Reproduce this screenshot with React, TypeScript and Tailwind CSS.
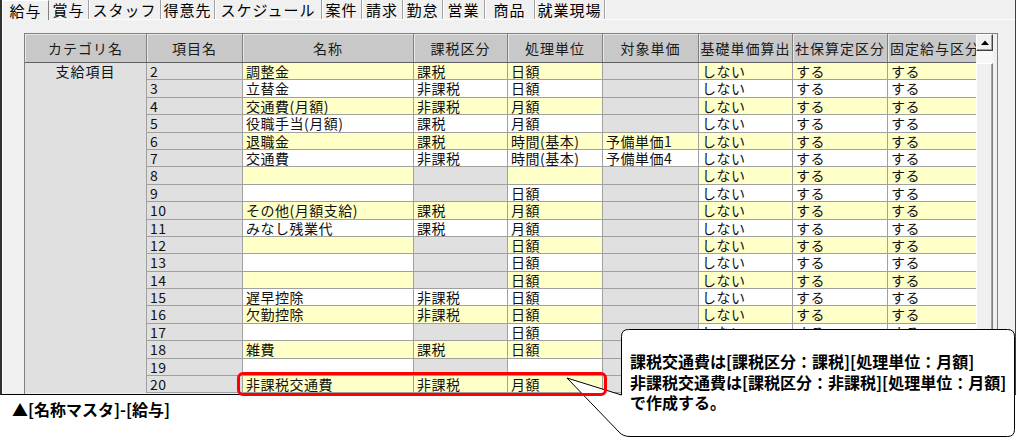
import React from 'react'

const font = "font-['Noto_Sans_CJK_JP','Noto_Sans',sans-serif]"

const tabs = [
  { label: '給与', w: 'w-[47px]' },
  { label: '賞与', w: 'w-[40px]' },
  { label: 'スタッフ', w: 'w-[72px]' },
  { label: '得意先', w: 'w-[54px]' },
  { label: 'スケジュール', w: 'w-[107px]' },
  { label: '案件', w: 'w-[40px]' },
  { label: '請求', w: 'w-[41px]' },
  { label: '勤怠', w: 'w-[40px]' },
  { label: '営業', w: 'w-[42px]' },
  { label: '商品', w: 'w-[50px]' },
  { label: '就業現場', w: 'w-[70px]' },
]

const headers = [
  { label: 'カテゴリ名', w: 'w-[122px]' },
  { label: '項目名', w: 'w-[96px]' },
  { label: '名称', w: 'w-[171px]' },
  { label: '課税区分', w: 'w-[94px]' },
  { label: '処理単位', w: 'w-[95px]' },
  { label: '対象単価', w: 'w-[96px]' },
  { label: '基礎単価算出', w: 'w-[94px]' },
  { label: '社保算定区分', w: 'w-[95px]' },
  { label: '固定給与区分', w: 'w-[95px]' },
]

type Row = { no: string; name: string; tax: string; unit: string; price: string }

const rows: Row[] = [
  { no: '2', name: '調整金', tax: '課税', unit: '日額', price: '' },
  { no: '3', name: '立替金', tax: '非課税', unit: '日額', price: '' },
  { no: '4', name: '交通費(月額)', tax: '非課税', unit: '月額', price: '' },
  { no: '5', name: '役職手当(月額)', tax: '課税', unit: '月額', price: '' },
  { no: '6', name: '退職金', tax: '課税', unit: '時間(基本)', price: '予備単価1' },
  { no: '7', name: '交通費', tax: '非課税', unit: '時間(基本)', price: '予備単価4' },
  { no: '8', name: '', tax: '', unit: '', price: '' },
  { no: '9', name: '', tax: '', unit: '日額', price: '' },
  { no: '10', name: 'その他(月額支給)', tax: '課税', unit: '月額', price: '' },
  { no: '11', name: 'みなし残業代', tax: '課税', unit: '月額', price: '' },
  { no: '12', name: '', tax: '', unit: '日額', price: '' },
  { no: '13', name: '', tax: '', unit: '日額', price: '' },
  { no: '14', name: '', tax: '', unit: '日額', price: '' },
  { no: '15', name: '遅早控除', tax: '非課税', unit: '日額', price: '' },
  { no: '16', name: '欠勤控除', tax: '非課税', unit: '日額', price: '' },
  { no: '17', name: '', tax: '', unit: '日額', price: '' },
  { no: '18', name: '雑費', tax: '課税', unit: '日額', price: '' },
  { no: '19', name: '', tax: '', unit: '', price: '' },
  { no: '20', name: '非課税交通費', tax: '非課税', unit: '月額', price: '' },
]

const cellBase = 'h-full shrink-0 border-r border-b border-[#a0a0a0] pl-[3px] whitespace-nowrap'

function Cell({ w, text, tone }: { w: string; text: string; tone: 'y' | 'w' | 'g' }) {
  const bg = tone === 'y' ? 'bg-[#ffffc8]' : tone === 'w' ? 'bg-white' : 'bg-[#e0e0e0]'
  return <div className={`${cellBase} ${w} ${bg}`}>{text}</div>
}

function GridRow({ row }: { row: Row }) {
  const tone = Number(row.no) % 2 === 0 ? 'y' : 'w'
  return (
    <div className="flex h-[17.4px] leading-[16px] text-[14px] tracking-[0.5px] text-[#111]">
      <Cell w="w-[96px]" text={row.no} tone="g" />
      <Cell w="w-[171px]" text={row.name} tone={tone} />
      <Cell w="w-[94px]" text={row.tax} tone={row.tax ? tone : 'g'} />
      <Cell w="w-[95px]" text={row.unit} tone={tone} />
      <Cell w="w-[96px]" text={row.price} tone={row.price ? tone : 'g'} />
      <Cell w="w-[94px]" text="しない" tone={tone} />
      <Cell w="w-[95px]" text="する" tone={tone} />
      <Cell w="w-[95px]" text="する" tone={tone} />
    </div>
  )
}

function ScrollBar() {
  return (
    <div className="flex w-[17px] shrink-0 flex-col">
      <div className="flex h-[17px] items-center justify-center border border-t-white border-l-white border-r-[#404040] border-b-[#404040] bg-[#f0f0f0] shadow-[inset_-1px_-1px_0_#a0a0a0]">
        <svg width="8" height="5" viewBox="0 0 8 5">
          <path d="M0 5 L4 0.5 L8 5 Z" fill="#000" />
        </svg>
      </div>
      <div className="h-[12px] bg-[#f7f7f7]" />
      <div className="flex-1 border border-t-white border-l-white border-r-[#808080] border-b-[#808080] bg-[#f0f0f0] shadow-[inset_-1px_0_0_#a0a0a0]" />
    </div>
  )
}

export default function App() {
  return (
    <div className={`relative h-[447px] w-[1024px] overflow-hidden bg-white ${font}`}>
      {/* window frame */}
      <div className="flex h-[395px] w-[1016px] flex-col overflow-hidden border-b border-l-2 border-r border-b-black border-l-[#303030] border-r-[#404040] bg-[#f0f0f0]">
        {/* tabs */}
        <div className="relative z-10 flex h-[19px] shrink-0 text-[15px] tracking-[1px] text-black">
          {tabs.map((t, i) =>
            i === 0 ? (
              <div
                key={t.label}
                className={`${t.w} flex h-[20px] items-center justify-center border-l border-t border-r border-l-white border-t-white border-r-[#808080] bg-[#f0f0f0] leading-[19px]`}
              >
                {t.label}
              </div>
            ) : (
              <div
                key={t.label}
                className={`${t.w} flex h-[19px] items-center justify-center border-r border-[#a0a0a0] leading-[19px] shadow-[1px_0_0_#fff]`}
              >
                {t.label}
              </div>
            )
          )}
        </div>

        {/* tab page */}
        <div className="flex-1 overflow-hidden border-t border-l border-t-white border-l-white pl-[21px] pt-[13px]">
          <div className="flex h-[400px] w-[974px] border-l border-t border-r border-[#808080]">
            <div className="w-[951px] shrink-0 overflow-hidden">
              <div className="w-[958px]">
                {/* header */}
                <div className="flex h-[29px] border-b border-[#606060] bg-[#c8c8c8] text-[14px] tracking-[1px] text-[#1a1a1a]">
                  {headers.map(h => (
                    <div
                      key={h.label}
                      className={`${h.w} flex shrink-0 items-center justify-center whitespace-nowrap border-r border-[#808080] shadow-[inset_1px_1px_0_#e8e8e8]`}
                    >
                      {h.label}
                    </div>
                  ))}
                </div>
                {/* body */}
                <div className="flex">
                  <div className="w-[122px] shrink-0 border-r border-[#a0a0a0] bg-[#e0e0e0] text-center text-[14px] leading-[17px] tracking-[1px] text-[#111]">
                    支給項目
                  </div>
                  <div className="flex flex-col">
                    {rows.map(r => (
                      <GridRow key={r.no} row={r} />
                    ))}
                  </div>
                </div>
              </div>
            </div>
            <ScrollBar />
            <div className="w-[4px] shrink-0" />
          </div>
        </div>
      </div>

      {/* caption */}
      <div className="pl-[12px] pt-[4px] text-[16px] font-bold leading-[20px] text-black">
        ▲[名称マスタ]-[給与]
      </div>

      {/* callout bubble */}
      <svg className="pointer-events-none absolute left-0 top-0" width="1024" height="447">
        <path
          d="M621.5 395 L621.5 336.5 Q621.5 329.5 628.5 329.5 L1007.5 329.5 Q1014.5 329.5 1014.5 336.5 L1014.5 429.5 Q1014.5 436.5 1007.5 436.5 L630 436.5 Q623 436.5 619 432 L567 378 Z"
          fill="#fff"
          stroke="#000"
          strokeWidth="1"
        />
      </svg>

      {/* highlight */}
      <div className="pointer-events-none absolute left-[237px] top-[372px] h-[24px] w-[370px] rounded-[6px] border-[3px] border-[#ff0000]" />

      <div className="absolute left-[630px] top-[351px] text-[16px] font-bold leading-[20.5px] text-black">
        <div>課税交通費は[課税区分：課税][処理単位：月額]</div>
        <div>非課税交通費は[課税区分：非課税][処理単位：月額]</div>
        <div>で作成する。</div>
      </div>
    </div>
  )
}
